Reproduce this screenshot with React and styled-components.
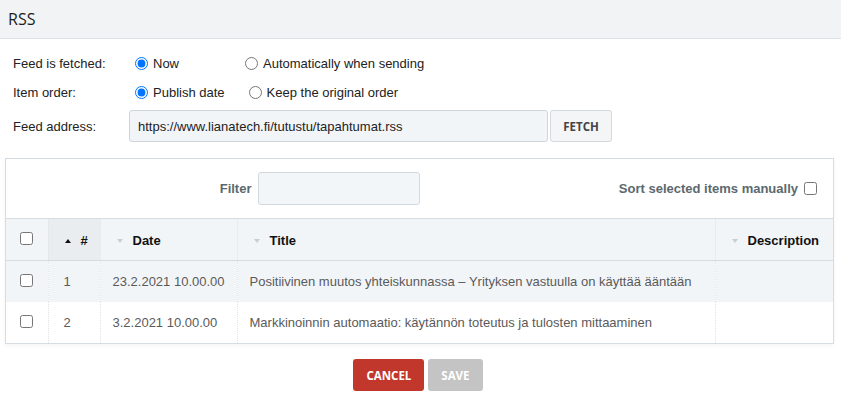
import React from 'react';
import styled, { createGlobalStyle } from 'styled-components';

const GlobalStyle = createGlobalStyle`
  html, body {
    margin: 0;
    padding: 0;
    background: #fff;
  }
  body {
    font-family: "Liberation Sans", Arial, sans-serif;
    font-size: 13px;
    color: #222;
  }
`;

const Header = styled.div`
  height: 38px;
  display: flex;
  align-items: center;
  padding-left: 8px;
  background: #f1f3f5;
  border-bottom: 1px solid #dde2e6;
  font-family: "Open Sans", sans-serif;
  font-size: 16px;
  color: #1e1e1e;
`;

const Form = styled.div`
  display: grid;
  grid-template-columns: 116px 1fr;
  padding: 10px 0 0 13px;
`;

const Label = styled.div`
  display: flex;
  align-items: center;
  height: ${(p) => p.$h || 29}px;
  color: #222;
`;

const Options = styled.div`
  display: flex;
  align-items: center;
  height: ${(p) => p.$h || 29}px;
`;

const Option = styled.label`
  display: flex;
  align-items: center;
  margin-right: ${(p) => p.$gap || 0}px;

  input {
    margin: 0 5px 0 6px;
    width: 13px;
    height: 13px;
  }
`;

const AddressRow = styled.div`
  display: flex;
  align-items: center;
  height: 38px;
  gap: 2px;
`;

const AddressInput = styled.input`
  box-sizing: border-box;
  width: 419px;
  height: 32px;
  padding: 0 8px;
  border: 1px solid #cfd6db;
  border-radius: 3px;
  background: #f2f5f8;
  font-family: "Liberation Sans", Arial, sans-serif;
  font-size: 13px;
  color: #222;
  outline: none;
`;

const FetchButton = styled.button`
  box-sizing: border-box;
  width: 62px;
  height: 32px;
  border: 1px solid #d3d9dd;
  border-radius: 3px;
  background: #f3f5f7;
  font-family: "Open Sans", sans-serif;
  font-weight: 700;
  font-size: 11.5px;
  color: #444;
`;

const Panel = styled.div`
  margin: 13px 7px 0 5px;
  border: 1px solid #d5dde3;
  box-shadow: 0 2px 4px rgba(0, 0, 0, 0.04);
`;

const Toolbar = styled.div`
  display: grid;
  grid-template-columns: 1fr 1fr;
  height: 59px;
  border-bottom: 1px solid #d5dde3;
`;

const ToolGroup = styled.div`
  display: flex;
  align-items: center;
  justify-content: flex-end;
  gap: 6px;
  padding-right: ${(p) => p.$pad || 0}px;
  font-weight: 700;
  color: #5b686d;
`;

const FilterInput = styled.input`
  box-sizing: border-box;
  width: 162px;
  height: 33px;
  border: 1px solid #d3dadf;
  border-radius: 3px;
  background: #f3f6f8;
  outline: none;
`;

const Check = styled.input.attrs({ type: 'checkbox' })`
  margin: 0;
  width: 13px;
  height: 13px;
`;

const Table = styled.table`
  width: 100%;
  border-collapse: collapse;
  table-layout: fixed;
`;

const Th = styled.th`
  height: 41px;
  padding: 0 0 0 16px;
  text-align: left;
  font-weight: 700;
  color: #111;
  background: ${(p) => (p.$sorted ? '#e9edf0' : '#f2f5f8')};
  border-bottom: 1px solid #d5dde3;
  border-left: 1px dotted #dfe4e8;
  &:first-child {
    border-left: none;
    padding: 0;
    text-align: center;
  }
`;

const Td = styled.td`
  height: 41px;
  padding: 0 0 0 ${(p) => p.$pad || 12}px;
  color: #5a5a5a;
  white-space: nowrap;
  overflow: hidden;
  border-left: 1px dotted #dfe4e8;
  &:first-child {
    border-left: none;
    padding: 0;
    text-align: center;
  }
`;

const Tr = styled.tr`
  background: ${(p) => (p.$alt ? '#f2f5f8' : '#fff')};
  & + & td {
    border-top: 1px solid #e1e6ea;
  }
`;

const HeadInner = styled.span`
  display: inline-flex;
  align-items: center;
  gap: 10px;
`;

const Caret = styled.span`
  width: 0;
  height: 0;
  border-left: 3px solid transparent;
  border-right: 3px solid transparent;
  ${(p) =>
    p.$up
      ? 'border-bottom: 4px solid #111;'
      : 'border-top: 4px solid #c8ced2;'}
`;

const Actions = styled.div`
  display: flex;
  justify-content: center;
  gap: 4px;
  padding: 15px 5px 0 0;
`;

const ActionButton = styled.button`
  box-sizing: border-box;
  height: 32px;
  padding: 0 ${(p) => p.$px}px;
  border: none;
  border-radius: 3px;
  background: ${(p) => p.$bg};
  color: #fff;
  font-family: "Open Sans", sans-serif;
  font-weight: 700;
  font-size: 11.5px;
`;

const rows = [
  {
    n: 1,
    date: '23.2.2021 10.00.00',
    title: 'Positiivinen muutos yhteiskunnassa – Yrityksen vastuulla on käyttää ääntään',
  },
  {
    n: 2,
    date: '3.2.2021 10.00.00',
    title: 'Markkinoinnin automaatio: käytännön toteutus ja tulosten mittaaminen',
  },
];

export default function App() {
  return (
    <>
      <GlobalStyle />
      <Header>RSS</Header>
      <Form>
        <Label>Feed is fetched:</Label>
        <Options>
          <Option $gap={60}>
            <input type="radio" name="fetch" defaultChecked />
            Now
          </Option>
          <Option>
            <input type="radio" name="fetch" />
            Automatically when sending
          </Option>
        </Options>
        <Label>Item order:</Label>
        <Options>
          <Option $gap={18}>
            <input type="radio" name="order" defaultChecked />
            Publish date
          </Option>
          <Option>
            <input type="radio" name="order" />
            Keep the original order
          </Option>
        </Options>
        <Label $h={38}>Feed address:</Label>
        <AddressRow>
          <AddressInput defaultValue="https://www.lianatech.fi/tutustu/tapahtumat.rss" />
          <FetchButton>FETCH</FetchButton>
        </AddressRow>
      </Form>

      <Panel>
        <Toolbar>
          <ToolGroup>
            Filter
            <FilterInput />
          </ToolGroup>
          <ToolGroup $pad={16}>
            Sort selected items manually
            <Check />
          </ToolGroup>
        </Toolbar>
        <Table>
          <colgroup>
            <col style={{ width: 42 }} />
            <col style={{ width: 52 }} />
            <col style={{ width: 137 }} />
            <col style={{ width: 478 }} />
            <col />
          </colgroup>
          <thead>
            <tr>
              <Th>
                <Check />
              </Th>
              <Th $sorted>
                <HeadInner>
                  <Caret $up />#
                </HeadInner>
              </Th>
              <Th>
                <HeadInner>
                  <Caret />
                  Date
                </HeadInner>
              </Th>
              <Th>
                <HeadInner>
                  <Caret />
                  Title
                </HeadInner>
              </Th>
              <Th>
                <HeadInner>
                  <Caret />
                  Description
                </HeadInner>
              </Th>
            </tr>
          </thead>
          <tbody>
            {rows.map((r, i) => (
              <Tr key={r.n} $alt={i % 2 === 0}>
                <Td>
                  <Check />
                </Td>
                <Td $pad={15}>{r.n}</Td>
                <Td>{r.date}</Td>
                <Td>{r.title}</Td>
                <Td />
              </Tr>
            ))}
          </tbody>
        </Table>
      </Panel>

      <Actions>
        <ActionButton $bg="#c2372b" $px={13}>
          CANCEL
        </ActionButton>
        <ActionButton $bg="#c4c4c4" $px={13}>
          SAVE
        </ActionButton>
      </Actions>
    </>
  );
}
